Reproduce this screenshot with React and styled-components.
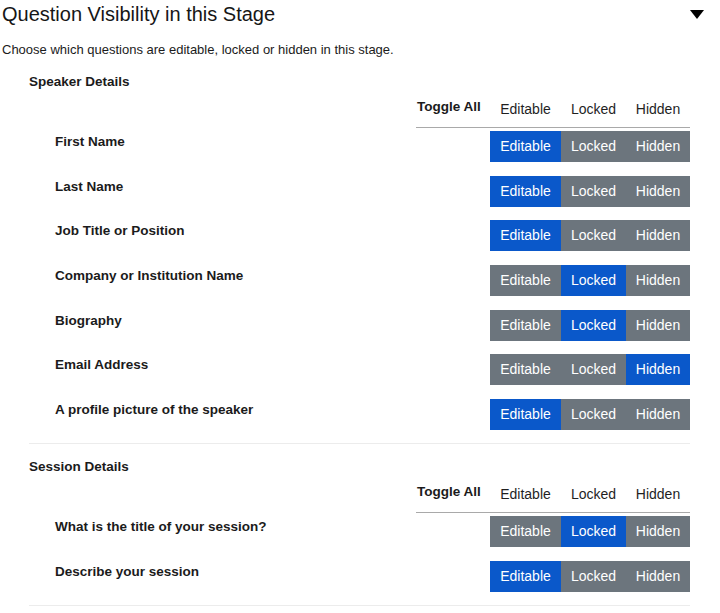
import React, { useState } from "react";
import styled, { createGlobalStyle } from "styled-components";

const GlobalStyle = createGlobalStyle`
  html, body { margin: 0; padding: 0; background: #fff; }
  body {
    font-family: "Liberation Sans", Arial, Helvetica, sans-serif;
    color: #1b1b1b;
  }
  * { box-sizing: border-box; }
`;

const Page = styled.div`
  width: 720px;
  padding: 0 15px 0 2px;
`;

const TitleBar = styled.div`
  display: flex;
  align-items: center;
  justify-content: space-between;
  height: 28px;
`;

const Title = styled.h2`
  margin: 0;
  font-size: 20px;
  font-weight: 400;
  line-height: 28px;
  color: #161616;
`;

const Caret = styled.button`
  width: 15px;
  height: 9px;
  padding: 0;
  border: none;
  background: none;
  cursor: pointer;
  display: flex;
  &::after {
    content: "";
    display: block;
    border-left: 7.5px solid transparent;
    border-right: 7.5px solid transparent;
    border-top: 9px solid #000;
  }
`;

const Description = styled.p`
  margin: 14px 0 2px;
  font-size: 13px;
  line-height: 15px;
  color: #1b1b1b;
`;

const Section = styled.section`
  margin: 0 15px 0 27px;
  padding: 15px 0 13px;
  border-bottom: 1px solid #ececec;
`;

const SectionTitle = styled.h3`
  margin: 0;
  font-size: 13.5px;
  font-weight: 700;
  line-height: 16px;
  color: #1b1b1b;
`;

const HeaderRow = styled.div`
  display: flex;
  align-items: flex-end;
  width: fit-content;
  margin: 8.5px 0 0 auto;
  border-bottom: 1px solid #a9a9a9;
`;

const ToggleAllCell = styled.div`
  width: 74px;
  padding: 0 0 12px 1px;
  font-size: 13.5px;
  font-weight: 700;
  line-height: 16px;
  color: #1b1b1b;
`;

const HeaderCell = styled.button`
  width: ${(p) => p.$width}px;
  padding: 0 0 10px;
  border: none;
  background: none;
  font-family: inherit;
  font-size: 14px;
  line-height: 16px;
  text-align: center;
  color: #1f1f1f;
  cursor: pointer;
`;

const Rows = styled.div`
  display: flex;
  flex-direction: column;
  gap: 13.7px;
  margin-top: 3.5px;
`;

const Row = styled.div`
  display: flex;
  align-items: flex-start;
  justify-content: space-between;
  padding-left: 26px;
`;

const Label = styled.div`
  padding-top: 3px;
  font-size: 13.5px;
  font-weight: 700;
  line-height: 16px;
  color: #1b1b1b;
`;

const ButtonGroup = styled.div`
  display: flex;
  height: 31px;
`;

const ToggleButton = styled.button`
  width: ${(p) => p.$width}px;
  height: 31px;
  padding: 0;
  border: none;
  margin: 0;
  font-family: inherit;
  font-size: 14px;
  line-height: 31px;
  text-align: center;
  color: #fff;
  background: ${(p) => (p.$active ? "#0a58ca" : "#6c757d")};
  cursor: pointer;
`;

const OPTIONS = [
  { key: "editable", text: "Editable", width: 71 },
  { key: "locked", text: "Locked", width: 65 },
  { key: "hidden", text: "Hidden", width: 64 },
];

const INITIAL = [
  {
    title: "Speaker Details",
    rows: [
      ["First Name", "editable"],
      ["Last Name", "editable"],
      ["Job Title or Position", "editable"],
      ["Company or Institution Name", "locked"],
      ["Biography", "locked"],
      ["Email Address", "hidden"],
      ["A profile picture of the speaker", "editable"],
    ],
  },
  {
    title: "Session Details",
    rows: [
      ["What is the title of your session?", "locked"],
      ["Describe your session", "editable"],
    ],
  },
];

function VisibilitySection({ section, onChange, onToggleAll }) {
  return (
    <Section>
      <SectionTitle>{section.title}</SectionTitle>
      <HeaderRow>
        <ToggleAllCell>Toggle All</ToggleAllCell>
        {OPTIONS.map((o) => (
          <HeaderCell key={o.key} $width={o.width} onClick={() => onToggleAll(o.key)}>
            {o.text}
          </HeaderCell>
        ))}
      </HeaderRow>
      <Rows>
        {section.rows.map(([label, value], i) => (
          <Row key={label}>
            <Label>{label}</Label>
            <ButtonGroup>
              {OPTIONS.map((o) => (
                <ToggleButton
                  key={o.key}
                  $width={o.width}
                  $active={value === o.key}
                  onClick={() => onChange(i, o.key)}
                >
                  {o.text}
                </ToggleButton>
              ))}
            </ButtonGroup>
          </Row>
        ))}
      </Rows>
    </Section>
  );
}

export default function App() {
  const [sections, setSections] = useState(INITIAL);

  const setRow = (si, ri, key) =>
    setSections((prev) =>
      prev.map((s, i) =>
        i !== si
          ? s
          : { ...s, rows: s.rows.map((r, j) => (j === ri ? [r[0], key] : r)) }
      )
    );

  const setAll = (si, key) =>
    setSections((prev) =>
      prev.map((s, i) =>
        i !== si ? s : { ...s, rows: s.rows.map((r) => [r[0], key]) }
      )
    );

  return (
    <Page>
      <GlobalStyle />
      <TitleBar>
        <Title>Question Visibility in this Stage</Title>
        <Caret aria-label="Collapse" />
      </TitleBar>
      <Description>
        Choose which questions are editable, locked or hidden in this stage.
      </Description>
      {sections.map((s, si) => (
        <VisibilitySection
          key={s.title}
          section={s}
          onChange={(ri, key) => setRow(si, ri, key)}
          onToggleAll={(key) => setAll(si, key)}
        />
      ))}
    </Page>
  );
}
